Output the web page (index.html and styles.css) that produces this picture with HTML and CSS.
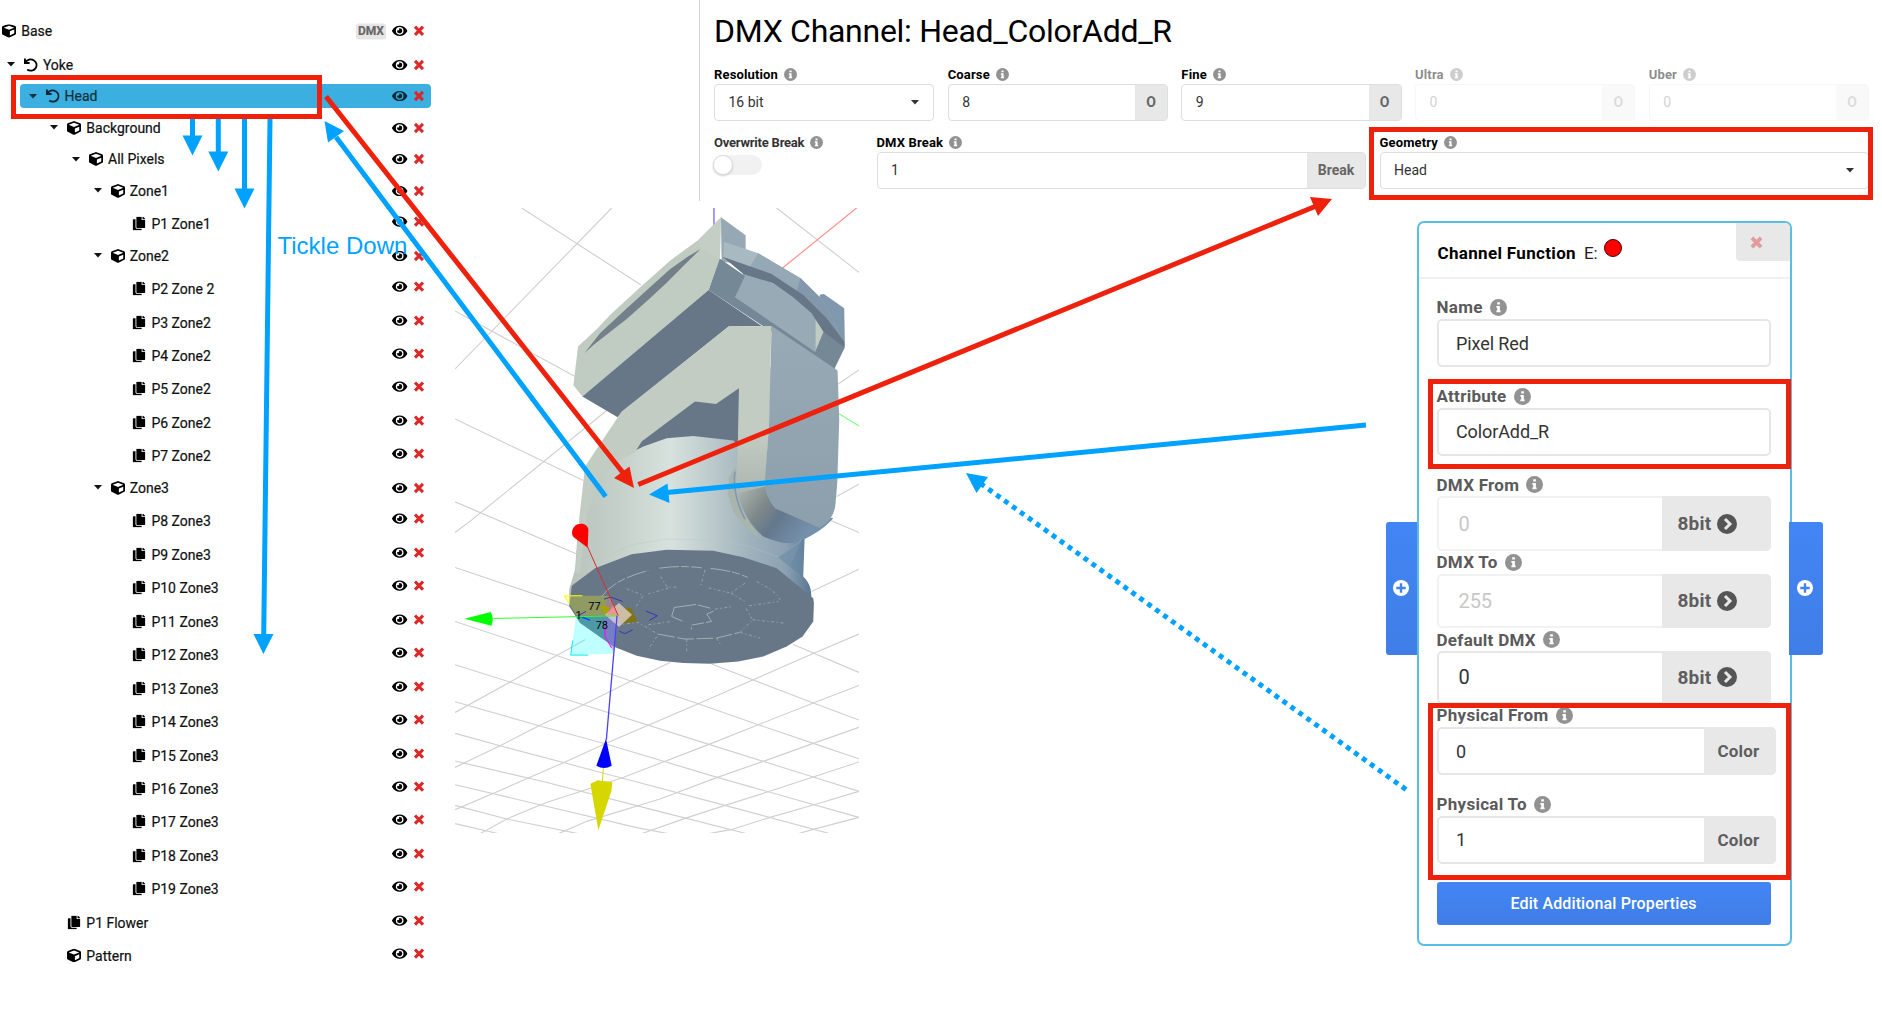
FILE: index.html
```html
<!DOCTYPE html>
<html lang="en">
<head>
<meta charset="utf-8">
<title>DMX Channel: Head_ColorAdd_R</title>
<link rel="stylesheet" href="styles.css">
</head>
<body>
<svg class="defs" aria-hidden="true">
  <symbol id="cube" viewBox="0 0 512 512"><path d="M239.1 6.3l-208 78c-18.7 7-31.1 25-31.1 45v225.1c0 18.2 10.3 34.8 26.5 42.9l208 104c13.5 6.8 29.4 6.8 42.9 0l208-104c16.3-8.1 26.5-24.8 26.5-42.9V129.3c0-20-12.4-37.9-31.1-44.9l-208-78C262 2.2 250 2.2 239.1 6.3zM256 68.4l192 72v1.1l-192 78-192-78v-1.1l192-72zm32 356V275.5l160-65v133.9l-160 80z"/></symbol>
  <symbol id="copy" viewBox="0 0 448 512"><path d="M320 448v40c0 13.255-10.745 24-24 24H24c-13.255 0-24-10.745-24-24V120c0-13.255 10.745-24 24-24h72v296c0 30.879 25.121 56 56 56h168zm0-344V0H152c-13.255 0-24 10.745-24 24v368c0 13.255 10.745 24 24 24h272c13.255 0 24-10.745 24-24V128H344c-13.2 0-24-10.8-24-24zm120.971-31.029L375.029 7.029A24 24 0 0 0 358.059 0H352v96h96v-6.059a24 24 0 0 0-7.029-16.97z"/></symbol>
  <symbol id="undo" viewBox="0 0 14 14"><path d="M.9 .6V5H5.6M1.4 4.6A5.9 5.6 0 1 1 3.2 11.6" fill="none" stroke="currentColor" stroke-width="1.8"/></symbol>
  <symbol id="caret" viewBox="0 0 8 5"><path d="M0 0H8L4 4.6Z"/></symbol>
  <symbol id="cross" viewBox="0 0 10 10"><path d="M1.5 1.5L8.5 8.5M8.5 1.5L1.5 8.5" fill="none" stroke="currentColor" stroke-width="2.9"/></symbol>
  <symbol id="acts" viewBox="0 0 32 14">
    <path transform="translate(0 .2) scale(.0266)" d="M572.52 241.4C518.29 135.59 410.93 64 288 64S57.68 135.64 3.48 241.41a32.35 32.35 0 0 0 0 29.19C57.71 376.41 165.07 448 288 448s230.32-71.64 284.52-177.41a32.35 32.35 0 0 0 0-29.19zM288 400a144 144 0 1 1 144-144 143.93 143.93 0 0 1-144 144zm0-240a95.31 95.31 0 0 0-25.31 3.79 47.85 47.85 0 0 1-66.9 66.9A95.78 95.78 0 1 0 288 160z"/>
    <path d="M23 2.9L31 11.1M31 2.9L23 11.1" fill="none" stroke="#db2828" stroke-width="3.1"/>
  </symbol>
  <symbol id="info" viewBox="0 0 16 16"><circle cx="8" cy="8" r="8" fill="#929292"/><path d="M6.8 3h2.5v2.2H6.8zM6 6.6h3.3v4.2H10V12.5H6V10.8h.8V8.2H6z" fill="#fff"/></symbol>
  <symbol id="next" viewBox="0 0 20 20"><circle cx="10" cy="10" r="10" fill="#555"/><path d="M8 5L13 10L8 15" fill="none" stroke="#e8e8e8" stroke-width="3"/></symbol>
  <symbol id="plus" viewBox="0 0 16 16"><circle cx="8" cy="8" r="8" fill="#fff"/><path d="M8 3.3V12.7M3.3 8H12.7" stroke="#4183ea" stroke-width="2.4"/></symbol>
</svg>

<ul class="tree">
  <li class="row leaf l0 base"><svg class="ic"><use href="#cube"/></svg><span>Base</span><b class="dmx">DMX</b><svg class="acts"><use href="#acts"/></svg></li>
  <li class="row l1"><svg class="caret"><use href="#caret"/></svg><svg class="ic"><use href="#undo"/></svg><span>Yoke</span><svg class="acts"><use href="#acts"/></svg></li>
  <li class="row l2 selected"><svg class="caret"><use href="#caret"/></svg><svg class="ic"><use href="#undo"/></svg><span>Head</span><svg class="acts"><use href="#acts"/></svg></li>
  <li class="row l3"><svg class="caret"><use href="#caret"/></svg><svg class="ic"><use href="#cube"/></svg><span>Background</span><svg class="acts"><use href="#acts"/></svg></li>
  <li class="row l4"><svg class="caret"><use href="#caret"/></svg><svg class="ic"><use href="#cube"/></svg><span>All Pixels</span><svg class="acts"><use href="#acts"/></svg></li>
  <li class="row l5"><svg class="caret"><use href="#caret"/></svg><svg class="ic"><use href="#cube"/></svg><span>Zone1</span><svg class="acts"><use href="#acts"/></svg></li>
  <li class="row leaf l6"><svg class="ic"><use href="#copy"/></svg><span>P1 Zone1</span><svg class="acts"><use href="#acts"/></svg></li>
  <li class="row l5"><svg class="caret"><use href="#caret"/></svg><svg class="ic"><use href="#cube"/></svg><span>Zone2</span><svg class="acts"><use href="#acts"/></svg></li>
  <li class="row leaf l6"><svg class="ic"><use href="#copy"/></svg><span>P2 Zone 2</span><svg class="acts"><use href="#acts"/></svg></li>
  <li class="row leaf l6"><svg class="ic"><use href="#copy"/></svg><span>P3 Zone2</span><svg class="acts"><use href="#acts"/></svg></li>
  <li class="row leaf l6"><svg class="ic"><use href="#copy"/></svg><span>P4 Zone2</span><svg class="acts"><use href="#acts"/></svg></li>
  <li class="row leaf l6"><svg class="ic"><use href="#copy"/></svg><span>P5 Zone2</span><svg class="acts"><use href="#acts"/></svg></li>
  <li class="row leaf l6"><svg class="ic"><use href="#copy"/></svg><span>P6 Zone2</span><svg class="acts"><use href="#acts"/></svg></li>
  <li class="row leaf l6"><svg class="ic"><use href="#copy"/></svg><span>P7 Zone2</span><svg class="acts"><use href="#acts"/></svg></li>
  <li class="row l5"><svg class="caret"><use href="#caret"/></svg><svg class="ic"><use href="#cube"/></svg><span>Zone3</span><svg class="acts"><use href="#acts"/></svg></li>
  <li class="row leaf l6"><svg class="ic"><use href="#copy"/></svg><span>P8 Zone3</span><svg class="acts"><use href="#acts"/></svg></li>
  <li class="row leaf l6"><svg class="ic"><use href="#copy"/></svg><span>P9 Zone3</span><svg class="acts"><use href="#acts"/></svg></li>
  <li class="row leaf l6"><svg class="ic"><use href="#copy"/></svg><span>P10 Zone3</span><svg class="acts"><use href="#acts"/></svg></li>
  <li class="row leaf l6"><svg class="ic"><use href="#copy"/></svg><span>P11 Zone3</span><svg class="acts"><use href="#acts"/></svg></li>
  <li class="row leaf l6"><svg class="ic"><use href="#copy"/></svg><span>P12 Zone3</span><svg class="acts"><use href="#acts"/></svg></li>
  <li class="row leaf l6"><svg class="ic"><use href="#copy"/></svg><span>P13 Zone3</span><svg class="acts"><use href="#acts"/></svg></li>
  <li class="row leaf l6"><svg class="ic"><use href="#copy"/></svg><span>P14 Zone3</span><svg class="acts"><use href="#acts"/></svg></li>
  <li class="row leaf l6"><svg class="ic"><use href="#copy"/></svg><span>P15 Zone3</span><svg class="acts"><use href="#acts"/></svg></li>
  <li class="row leaf l6"><svg class="ic"><use href="#copy"/></svg><span>P16 Zone3</span><svg class="acts"><use href="#acts"/></svg></li>
  <li class="row leaf l6"><svg class="ic"><use href="#copy"/></svg><span>P17 Zone3</span><svg class="acts"><use href="#acts"/></svg></li>
  <li class="row leaf l6"><svg class="ic"><use href="#copy"/></svg><span>P18 Zone3</span><svg class="acts"><use href="#acts"/></svg></li>
  <li class="row leaf l6"><svg class="ic"><use href="#copy"/></svg><span>P19 Zone3</span><svg class="acts"><use href="#acts"/></svg></li>
  <li class="row leaf l3"><svg class="ic"><use href="#copy"/></svg><span>P1 Flower</span><svg class="acts"><use href="#acts"/></svg></li>
  <li class="row leaf l3"><svg class="ic"><use href="#cube"/></svg><span>Pattern</span><svg class="acts"><use href="#acts"/></svg></li>
</ul>

<main class="main">
  <section class="channel">
    <h1>DMX Channel: Head_ColorAdd_R</h1>
    <div class="five">
      <div><label>Resolution <svg><use href="#info"/></svg></label><div class="box select">16 bit<svg class="caret"><use href="#caret"/></svg></div></div>
      <div><label>Coarse <svg><use href="#info"/></svg></label><div class="box">8<b>O</b></div></div>
      <div><label>Fine <svg><use href="#info"/></svg></label><div class="box">9<b>O</b></div></div>
      <div class="off"><label>Ultra <svg><use href="#info"/></svg></label><div class="box">0<b>O</b></div></div>
      <div class="off"><label>Uber <svg><use href="#info"/></svg></label><div class="box">0<b>O</b></div></div>
    </div>
    <div class="three">
      <div><label class="soft">Overwrite Break <svg><use href="#info"/></svg></label><div class="toggle"><i></i></div></div>
      <div><label>DMX Break <svg><use href="#info"/></svg></label><div class="box">1<b class="brk">Break</b></div></div>
      <div><label>Geometry <svg><use href="#info"/></svg></label><div class="box select">Head<svg class="caret"><use href="#caret"/></svg></div></div>
    </div>
  </section>

  <div class="lower">
    <svg class="view" viewBox="15 24 1212 1876">
      <defs>
        <linearGradient id="body" gradientUnits="userSpaceOnUse" x1="360" y1="0" x2="1080" y2="0">
          <stop offset="0" stop-color="#b7c3bb"/><stop offset=".2" stop-color="#c4d0c9"/><stop offset=".42" stop-color="#d7e2de"/><stop offset=".55" stop-color="#c3d0d0"/><stop offset=".75" stop-color="#9fb2bc"/><stop offset=".9" stop-color="#8ba1b2"/><stop offset="1" stop-color="#5c7894"/>
        </linearGradient>
        <linearGradient id="side" x1="0" y1="0" x2="0" y2="1"><stop offset="0" stop-color="#97aab5"/><stop offset="1" stop-color="#8c9fac"/></linearGradient>
        <linearGradient id="foot" gradientUnits="userSpaceOnUse" x1="870" y1="870" x2="1060" y2="1010"><stop offset="0" stop-color="#a9b4ad"/><stop offset=".35" stop-color="#7f898a"/><stop offset=".6" stop-color="#64788c"/><stop offset="1" stop-color="#7590ab"/></linearGradient>
        <linearGradient id="arm" gradientUnits="userSpaceOnUse" x1="0" y1="700" x2="0" y2="960"><stop offset="0" stop-color="#c2ccc3"/><stop offset="1" stop-color="#a3ada6"/></linearGradient>
      </defs>
      <g fill="none" stroke="#d0d0d0" stroke-width="3.4">
        <path d="M215 24L573 255M980 24L1227 217M485 24L15 507M15 333L375 530M15 657L400 842M470 632L65 960L15 998M15 906L378 1062M1227 510L1165 552M1227 853L1160 890M1227 998L1085 937M1227 1108L1085 1175M15 1103L370 1222M15 1265L180 1320L320 1367L543 1444L745 1512L925 1575L1090 1631L1227 1677M785 1393L1090 1510L1227 1561M1030 1334L1227 1418"/>
        <path d="M15 1395L180 1447L400 1515L777 1634L1090 1732L1227 1775M15 1506L267 1578L465 1632L802 1733L1227 1853M15 1601L150 1638L515 1735L825 1817L1140 1902M15 1684L285 1747L615 1832L890 1902M15 1755L560 1884L655 1902M15 1817L170 1858L385 1902M15 1872L145 1902"/>
        <path d="M15 1538L180 1447L320 1367L405 1320M15 1703L150 1638L267 1578L400 1515L543 1444L660 1388M15 1830L127 1782L340 1689L465 1632L745 1512L908 1441L1090 1361L1227 1303M90 1902L170 1858L285 1810L515 1735L777 1634L925 1575L1090 1510L1227 1457M325 1902L410 1865L630 1798L802 1733L940 1685L1090 1631L1227 1583M575 1902L705 1856L825 1817L952 1777L1090 1732L1227 1687M775 1902L843 1890L960 1853L1090 1816L1227 1775M1045 1902L1090 1889L1227 1853"/>
      </g>
      <path d="M792 24V80" stroke="#6a50f0" stroke-width="3.5"/>
      <path d="M1220 24L998 204" stroke="#ff9089" stroke-width="3.5"/>
      <path d="M1165 640L1227 678" stroke="#86ff86" stroke-width="3.5"/>
      <path fill="#95a8b4" d="M813 52L887 106V152L960 200L815 185Z"/>
      <path fill="#7f98ad" d="M1110 284L1122 282L1183 325L1185 442L1105 320Z"/>
      <path fill="#a8b9c1" d="M822 125L925 160L1052 235L1118 300L1150 360L1183 432L1120 370L1040 275L965 235L820 172Z"/>
      <path fill="#94a8b6" d="M925 160L1052 235L1118 300L1150 360L1183 432L1120 370L1040 275L900 200Z"/>
      <path fill="#8398ac" d="M1052 235L1118 300L1150 360L1183 432L1120 370L1040 275Z"/>
      <path fill="#97aab5" d="M880 220L970 250L1035 292L1100 350V460L965 378L850 292Z"/>
      <path fill="#c0cbc1" d="M1097 350L1125 392L1097 458Z"/>
      <path fill="#758896" d="M1123 390L1185 442L1153 508L1095 458ZM808 175L885 228L855 292L1097 457L1160 510L1130 500L960 392L776 270Z"/>
      <path fill="#677788" d="M818 170L965 222L1060 285L1130 355L1183 425V442L1120 395L1085 340L1030 292L970 250L880 222Z"/>
      <path fill="#c0cbc1" d="M813 52L810 175L776 270L397 590L370 556L384 440L443 385L480 345L575 258L660 182L745 120Z"/>
      <path fill="#c8d1c7" d="M813 52L810 175L752 147L745 120Z" opacity=".6"/>
      <path fill="#73808a" d="M752 147L715 169L660 208L600 262L520 335L450 400L403 460L430 435L530 357L600 295L650 248L700 198Z"/>
      <path fill="#677788" d="M776 270L935 378L836 380L515 637L503 652L397 590Z"/>
      <path fill="#677788" d="M870 560L870 740L550 770L560 730L735 590Z"/>
      <path fill="url(#body)" d="M357 1220L357 1170L375 1110L382 1010L408 900L440 830L500 780L580 740L650 715L730 708L850 722L900 760L1065 990L1060 1130C1090 1160 1084 1190 1083 1210L720 1350Z"/>
      <path fill="#c2ccc3" d="M836 380L965 378L960 520L867 565L798 612L735 605L575 725L555 757L500 785L445 850L412 940L390 1120L376 1120L387 960L405 800L515 635Z"/>
      <path fill="url(#arm)" d="M867 565L965 500L957 680L945 860L965 905L975 1000L920 975L870 900L861 850Z"/>
      <path fill="#a9b4ac" d="M858 800L838 830L833 880L850 935L890 985L933 1018L880 940L855 870Z"/>
      <path fill="none" stroke="#8198ad" stroke-width="5" d="M855 815C848 860 862 915 885 958"/>
      <path fill="url(#foot)" d="M862 880L945 860L970 915L1150 955C1120 990 1070 1018 1035 1029C1000 1034 970 1022 940 1010Q885 965 862 880Z"/>
      <path fill="url(#side)" d="M965 378L1163 512L1168 660L1162 850L1156 920Q1148 965 1108 984L975 925Q946 890 944 850L957 680Z"/>
      <path fill="#a2b5bd" d="M985 1073L1055 1020L1020 1100Z" opacity=".5"/>
      <path fill="#6685a3" d="M985 1073L1060 1020L1057 1130Z" opacity=".65"/>
      <path fill="none" stroke="#b5c6cb" stroke-width="3" opacity=".35" d="M430 1085L545 1035L650 1018L790 1020L900 1040L985 1072"/>
      <path fill="#677788" d="M365 1158L435 1105L545 1063L650 1050L790 1053L880 1072L980 1105L1090 1195L1092 1210L1090 1265L1058 1310L1010 1340L940 1370L865 1385L780 1392L700 1390L630 1383L560 1368L490 1340L390 1270L358 1220Z"/>
      <g fill="none" stroke="#a9b7b8" stroke-width="2.6">
        <path stroke-dasharray="60 5 24 7" d="M455 1190Q490 1140 595 1112M628 1105Q690 1096 755 1104M782 1106Q850 1112 893 1133"/>
        <path stroke-width="2" stroke-dasharray="9 7 4 8" d="M920 1145Q980 1175 990 1200M632 1130L652 1162L685 1162M765 1110L752 1160M885 1150L843 1180L775 1164M843 1180L890 1208M897 1218L985 1205M655 1165L595 1182M530 1167L580 1187L555 1225M503 1275L565 1268L625 1304L595 1348M870 1298L908 1260L885 1220M870 1298L930 1315M908 1260L1005 1270M710 1318V1360M800 1315L812 1335M595 1275L665 1265M725 1290L722 1275M795 1228L850 1220"/>
        <path d="M673 1223L738 1214L800 1230L770 1243L785 1265L725 1276L665 1250Z" stroke-dasharray="66 6 38 30"/>
        <path d="M625 1303L705 1318L800 1315L868 1298" stroke-dasharray="50 8"/>
      </g>
      <path fill="#fffb00" opacity=".27" d="M343 1188H480L505 1248H380Z"/>
      <path fill="#0ff" opacity=".25" d="M378 1250H505L490 1362L362 1366Z"/>
      <path fill="#c050ff" opacity=".36" d="M475 1190L505 1248L492 1358L463 1310V1240Z"/>
      <path fill="#a9a300" d="M447 1217L480 1222L470 1250Z"/>
      <path fill="#7e7614" d="M500 1222L543 1224L563 1265L515 1272Z"/>
      <path fill="#e2d0c9" opacity=".8" d="M507 1210L546 1245L507 1282L465 1245Z"/>
      <path fill="#f08a8a" opacity=".8" d="M490 1215L506 1248L470 1245Z"/>
      <g fill="none" stroke-width="3">
        <path stroke="#ff0" d="M397 1188H343L357 1212"/>
        <path stroke="#0ee" d="M368 1322L362 1366H415"/>
        <path stroke="#3434b8" d="M408 1235L383 1248M462 1198L482 1192L518 1205M588 1234L622 1248L598 1262M508 1294L524 1302L548 1290"/>
        <path stroke="#0048ff" stroke-width="4" d="M390 1250L420 1261"/>
        <path stroke="#f0f" d="M465 1280V1310L485 1345"/>
        <path stroke="#e02727" d="M412 1040L505 1248"/>
        <path stroke="#2cff2c" d="M130 1256L505 1248"/>
        <path stroke="#4b43f2" stroke-width="4" d="M501 1248L469 1620"/>
        <path stroke="#d8d800" d="M460 1705L457 1745"/>
      </g>
      <path fill="red" d="M366 1000C366 982 378 972 393 972C405 972 415 980 415 990L413 1044L373 1014Q366 1008 366 1000Z"/>
      <path fill="#0f0" d="M43 1257L122 1237Q133 1256 124 1278Z"/>
      <path fill="#00f" d="M468 1617L485 1698Q462 1712 439 1698Z"/>
      <path fill="#d7d700" d="M421 1752L443 1742L487 1748L484 1775L445 1892Z"/>
      <g class="ids"><text x="415" y="1232">77</text><text x="376" y="1259">1</text><text x="437" y="1288">78</text></g>
    </svg>

    <div class="fn">
      <div class="tab"><svg><use href="#plus"/></svg></div>
      <section class="card">
        <header><b>Channel Function</b><span>E:</span><i class="dot"></i><div class="close"><svg><use href="#cross"/></svg></div></header>
        <div class="fields">
          <label>Name <svg><use href="#info"/></svg></label><div class="in">Pixel Red</div>
          <label class="gap">Attribute <svg><use href="#info"/></svg></label><div class="in">ColorAdd_R</div>
          <label class="gap">DMX From <svg><use href="#info"/></svg></label><div class="in big dis">0<b>8bit <svg><use href="#next"/></svg></b></div>
          <label class="tight">DMX To <svg><use href="#info"/></svg></label><div class="in big dis">255<b>8bit <svg><use href="#next"/></svg></b></div>
          <label class="tight">Default DMX <svg><use href="#info"/></svg></label><div class="in big cut">0<b>8bit <svg><use href="#next"/></svg></b></div>
          <label class="tight">Physical From <svg><use href="#info"/></svg></label><div class="in wide">0<b>Color</b></div>
          <label class="gap">Physical To <svg><use href="#info"/></svg></label><div class="in wide">1<b>Color</b></div>
          <div class="btn">Edit Additional Properties</div>
        </div>
      </section>
      <div class="tab right"><svg><use href="#plus"/></svg></div>
    </div>
  </div>
</main>

<svg class="notes" viewBox="0 0 1882 1023">
  <g fill="none" stroke="#ee220c" stroke-width="5">
    <rect x="13.5" y="77.5" width="306" height="39"/>
    <rect x="1371.5" y="129.5" width="499" height="68"/>
    <rect x="1430.5" y="381.5" width="358" height="85"/>
    <rect x="1430.5" y="705.5" width="358" height="172"/>
  </g>
  <g fill="none" stroke="#00a2ff" stroke-width="5">
    <path d="M192.5 119V137M218.3 119V153M244.5 119V190M270 119L263.7 636M605.7 496.5L336 137M1366 425L667 492.5"/>
    <path d="M1406 789.5L980 483" stroke-dasharray="4.9 4.9"/>
  </g>
  <g fill="#00a2ff">
    <path d="M182.5 135.5H202.5L192.5 155.5ZM208.3 151.5H228.3L218.3 171.5ZM234.5 188.5H254.5L244.5 208.5ZM253.5 634H273.5L263.4 654Z"/>
    <path d="M324.5 121L344 131L328 142.5ZM649 494.5L667.5 483.5L669.5 503ZM966 473L988 477L976.5 493Z"/>
  </g>
  <path d="M326 96.5L624 474M638.3 484.5L1315 206.5" fill="none" stroke="#ee220c" stroke-width="5"/>
  <path d="M634 488L614 478L629.5 466.5ZM1332 199L1310 197L1318 216Z" fill="#ee220c"/>
  <text x="277.5" y="253.5">Tickle Down</text>
</svg>
</body>
</html>
```
FILE: styles.css
```css
* { box-sizing: border-box; }
body {
  margin: 0;
  width: 1882px;
  height: 1023px;
  position: relative;
  overflow: hidden;
  display: flex;
  background: #fff;
  color: #111;
  font-family: Roboto, "Liberation Sans", sans-serif;
  font-size: 14px;
}
svg { display: block; fill: currentColor; flex: none; }
.defs { position: absolute; width: 0; height: 0; }

/* geometry tree */
.tree { list-style: none; margin: 0; padding: 15.5px 0 0; width: 431px; flex: none; }
.row {
  --text: calc(21.2px + 21.7px * var(--l));
  display: flex;
  align-items: center;
  height: 31.5px;
  padding: 0 7px 0 calc(var(--text) - 36px);
  -webkit-text-stroke: .2px;
  white-space: nowrap;
}
.leaf { height: 33.46px; padding-left: calc(var(--text) - 19px); }
.leaf span, .leaf .ic { transform: translateY(.6px); }
.leaf .acts { transform: translateY(-1.4px); }
.base * { transform: translateY(-.6px) !important; }
.l0 { --l: 0; } .l1 { --l: 1; } .l2 { --l: 2; } .l3 { --l: 3; }
.l4 { --l: 4; } .l5 { --l: 5; } .l6 { --l: 6; }
.caret { width: 8px; height: 5px; margin-right: 9px; }
.ic { width: 14px; height: 14px; margin-right: 5px; color: #000; }
.acts { width: 32px; height: 14px; margin-left: auto; color: #000; }
.selected {
  background: #3bafe0;
  margin: 4px 0 4px 20px;
  height: 23.5px;
  padding-left: calc(var(--text) - 56px);
  border-radius: 4px;
  color: #12303d;
}
.selected .ic, .selected .acts { color: #082835; }
.dmx {
  margin-left: auto;
  margin-right: 6.5px;
  padding: 0 1.5px;
  height: 16px;
  line-height: 16px;
  font-size: 12px;
  color: #666;
  background: #e6e6e6;
  border-radius: 3px;
}
.dmx + .acts { margin-left: 0; }

/* channel settings */
.main { flex: 1; min-width: 0; }
.channel {
  margin-left: 268px;
  height: 201px;
  padding: 12px 13px 0 14px;
  border-left: 1px solid #d4d4d5;
}
h1 { margin: 0; font-weight: 400; font-size: 32px; line-height: 38px; letter-spacing: -.28px; color: #000; white-space: nowrap; }
.five { display: grid; grid-template-columns: repeat(5, 1fr); gap: 13.4px; margin-top: 15.5px; }
.three { display: grid; grid-template-columns: 149px 489.5px 489px; column-gap: 13.5px; margin-top: 13px; }
.channel label {
  display: flex;
  align-items: center;
  gap: 6px;
  height: 18px;
  font-size: 13px;
  font-weight: 700;
  letter-spacing: .15px;
  color: #000;
}
.channel label svg { width: 13px; height: 13px; }
.channel .soft { color: #333; letter-spacing: -.22px; }
.box {
  display: flex;
  align-items: center;
  height: 37px;
  padding-left: 13.5px;
  border: 1px solid #dededf;
  border-radius: 4px;
  color: #333;
}
.box b {
  margin-left: auto;
  align-self: stretch;
  width: 32px;
  display: grid;
  place-items: center;
  background: #e8e8e8;
  color: #666;
  font-size: 14px;
}
.box .brk { width: 58px; }
.select .caret { margin-left: auto; margin-right: 14px; }
.off label { opacity: .45; }
.off .box { opacity: .22; }
.toggle { width: 49px; height: 20px; margin: 3.5px 0 0 -1px; border-radius: 10px; background: #f1f1f1; }
.toggle i { display: block; width: 20px; height: 20px; border-radius: 50%; background: #fff; border: 1px solid #ddd; box-shadow: 0 1px 2px #ccc; }

/* 3D view and channel function */
.lower { display: flex; align-items: flex-start; padding-left: 24px; }
.view { width: 404px; height: 625px; margin-top: 7px; }
.ids { font: 33px Roboto, sans-serif; fill: #000; }
.fn { display: flex; align-items: flex-start; margin: 20px 0 0 526.5px; }
.tab {
  width: 31px;
  height: 133px;
  margin-top: 300.5px;
  display: grid;
  place-items: center;
  background: linear-gradient(#4285f4, #407ee6);
  border-radius: 3px 0 0 3px;
}
.tab svg { width: 16px; height: 16px; }
.right { width: 34px; margin-left: -3px; padding-right: 1px; border-radius: 0 3px 3px 0; position: relative; }
.card {
  width: 375px;
  height: 725px;
  border: 2px solid #5cbde4;
  border-radius: 7px;
}
.card header {
  display: flex;
  align-items: center;
  height: 55.5px;
  padding-left: 19px;
  padding-top: 6px;
  border-bottom: 2px solid #f0f0f0;
  font-size: 17px;
}
header b { color: #000; letter-spacing: .33px; }
header span { margin-left: 8px; color: #222; }
.dot { width: 18px; height: 18px; margin: -9px 0 0 6px; border-radius: 50%; background: red; border: 1px solid #400; }
.close {
  margin: -6px 0 0 auto;
  align-self: flex-start;
  width: 54px;
  height: 38px;
  display: grid;
  place-items: center;
  padding-right: 13px;
  background: #e8e8e8;
  color: #e39a9a;
  border-radius: 0 5px 0 4px;
}
.close svg { width: 13px; height: 13px; }
.fields { padding: 17.5px 13px 0 18px; display: flex; flex-direction: column; }
.fields label {
  display: flex;
  align-items: center;
  gap: 7px;
  height: 22.8px;
  font-size: 17px;
  font-weight: 700;
  letter-spacing: .28px;
  color: #5a5a5a;
}
.fields label svg { width: 17px; height: 17px; }
.fields .gap { margin-top: 17.5px; }
.in {
  display: flex;
  align-items: center;
  width: 334px;
  height: 48.5px;
  padding-left: 17.5px;
  border: 2px solid #e6e6e6;
  border-radius: 5px;
  font-size: 18px;
  letter-spacing: -.1px;
  color: #333;
}
.in b {
  margin: -2px -2px -2px auto;
  align-self: stretch;
  width: 109px;
  display: flex;
  align-items: center;
  gap: 6px;
  padding-left: 16px;
  background: #e8e8e8;
  color: #5e5e5e;
  border-radius: 0 5px 5px 0;
  font-size: 19px;
  letter-spacing: .2px;
}
.in b svg { width: 20px; height: 20px; }
.big { height: 54.5px; padding-left: 20px; font-size: 20px; }
.dis { color: #c8c8c8; border-color: #f2f2f2; }
.cut { height: 53px; }
.wide { width: 339px; }
.wide b { width: 72px; padding-left: 14px; font-size: 17px; }
.btn {
  width: 334px;
  height: 43.5px;
  margin-top: 17.5px;
  display: grid;
  place-items: center;
  background: linear-gradient(#4285f4, #407ee6);
  border-radius: 3px;
  color: #fff;
  font-size: 16px;
  font-weight: 500;
  letter-spacing: .13px;
}

/* callouts over the page */
.notes { position: absolute; inset: 0; width: 1882px; height: 1023px; pointer-events: none; }
.notes text { font: 24px "Liberation Sans", sans-serif; fill: #00a2ff; }
```
